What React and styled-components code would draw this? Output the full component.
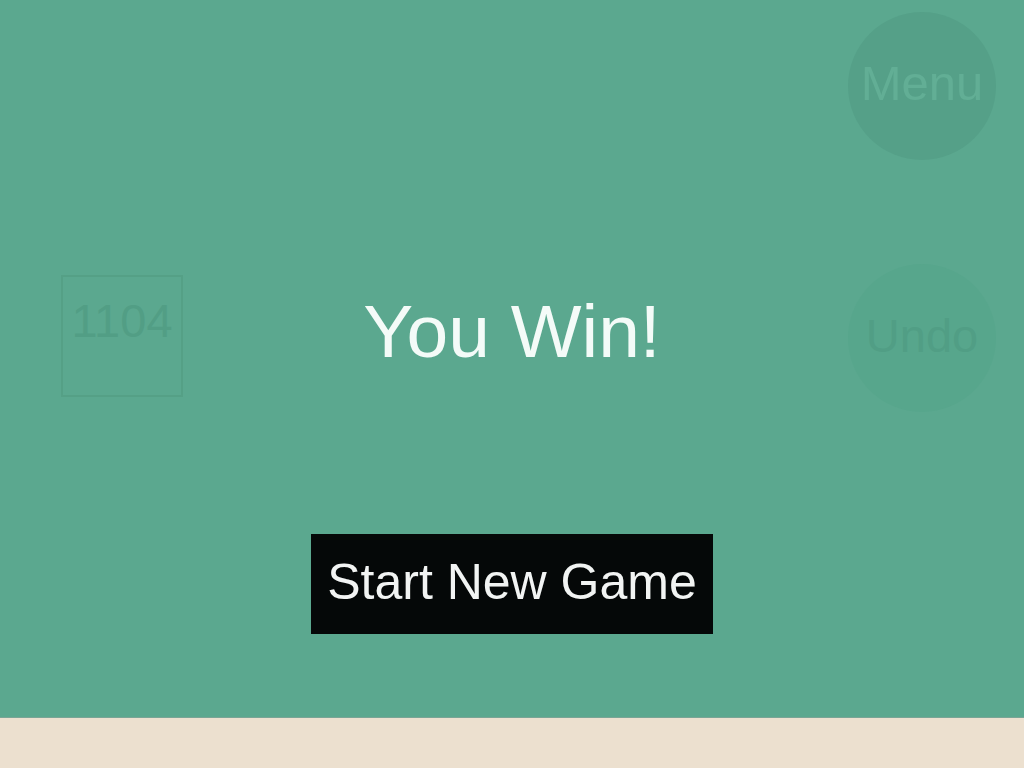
import styled, { createGlobalStyle } from 'styled-components';

const GlobalStyle = createGlobalStyle`
  html, body {
    margin: 0;
    padding: 0;
    background: #ece0cf;
    font-family: 'Liberation Sans', Arial, sans-serif;
  }
`;

// Page frame: green play area over the beige floor
const Page = styled.div`
  width: 1024px;
  height: 768px;
  display: flex;
  flex-direction: column;
  background: #ece0cf;
`;

const Stage = styled.div`
  position: relative;
  height: 718px;
  background: #5ba88f;
  border-bottom: 1px solid #7aa596;
  box-sizing: border-box;
`;

// Game underneath the win overlay (faded)
const GameLayer = styled.div`
  display: flex;
  justify-content: space-between;
  padding: 12px 28px 0 61px;
`;

const ScoreBox = styled.div`
  margin-top: 263px;
  width: 122px;
  height: 122px;
  box-sizing: border-box;
  border: 2px solid #55a086;
  color: #529e85;
  font-size: 47px;
  line-height: 1;
  text-align: center;
  padding-top: 20px;
`;

const SideButtons = styled.div`
  display: flex;
  flex-direction: column;
  gap: 104px;
`;

const RoundButton = styled.div`
  width: 148px;
  height: 148px;
  box-sizing: border-box;
  border-radius: 50%;
  display: flex;
  align-items: center;
  justify-content: center;
  padding-bottom: ${({ lift }) => lift || 0}px;
  font-size: ${({ size }) => size}px;
  background: ${({ bg }) => bg};
  color: ${({ fg }) => fg};
`;

// Win overlay sits on top of the game
const Overlay = styled.div`
  position: absolute;
  inset: 0;
  display: flex;
  flex-direction: column;
  align-items: center;
  padding-top: 294px;
`;

const Title = styled.div`
  color: #f4fbf8;
  font-size: 75px;
  line-height: 75px;
  margin-bottom: 165px;
`;

const NewGameButton = styled.button`
  width: 402px;
  height: 100px;
  border: none;
  background: #050808;
  color: #f2f4f3;
  font-family: 'Liberation Sans', Arial, sans-serif;
  font-size: 50px;
  padding: 0 0 4px;
  cursor: pointer;
`;

export default function App() {
  return (
    <Page>
      <GlobalStyle />
      <Stage>
        <GameLayer>
          <ScoreBox>1104</ScoreBox>
          <SideButtons>
            <RoundButton size={49} lift={6} bg="#55a088" fg="#62ae95">
              Menu
            </RoundButton>
            <RoundButton size={47} lift={6} bg="#57a68c" fg="#519e85">
              Undo
            </RoundButton>
          </SideButtons>
        </GameLayer>
        <Overlay>
          <Title>You Win!</Title>
          <NewGameButton>Start New Game</NewGameButton>
        </Overlay>
      </Stage>
    </Page>
  );
}
